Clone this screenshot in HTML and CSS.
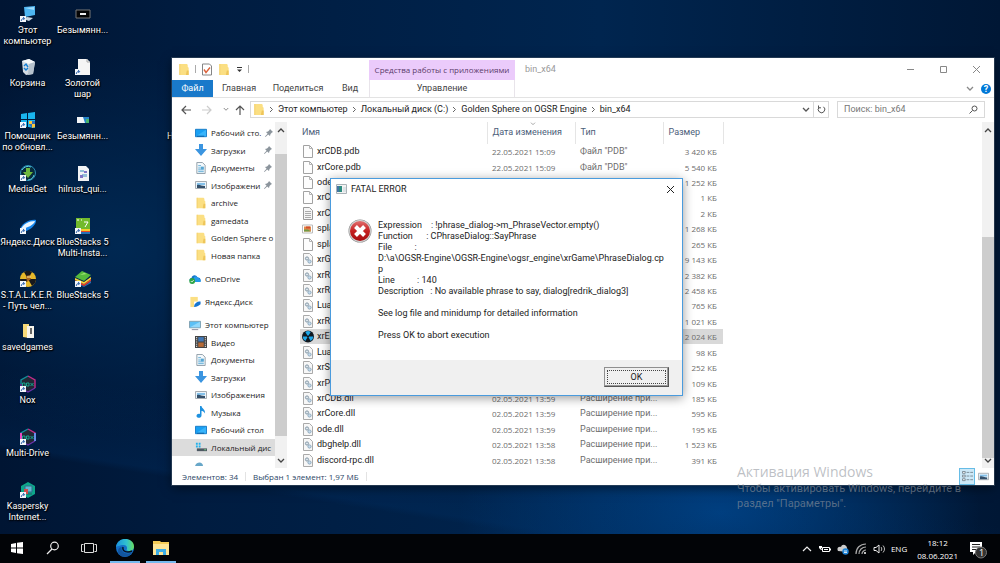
FILE: index.html
```html
<!DOCTYPE html>
<html lang="ru">
<head>
<meta charset="utf-8">
<title>Рабочий стол</title>
<link rel="stylesheet" href="styles.css">
</head>
<body>
<svg class="defs" aria-hidden="true">
  <defs>
    <symbol id="folder" viewBox="0 0 12 14"><path d="M1 1h8l1 1v2l1 1v8H1z" fill="#fbdf83"/><path d="M9 8h2v5H8z" fill="#eec55a"/><path d="M1 1h1v12H1z" fill="#f3cf6d"/></symbol>
    <symbol id="page" viewBox="0 0 10 13"><path d="M.5.5h6l3 3v9h-9z" fill="#fdfdfd" stroke="#a2a2a2"/><path d="M6.500.5v3h3" fill="none" stroke="#b5b5b5"/></symbol>
    <symbol id="dll" viewBox="0 0 10 13"><path d="M.5.5h6l3 3v9h-9z" fill="#f7f7f7" stroke="#aaa"/><circle cx="4" cy="5.500" r="1.600" fill="#dce5ec" stroke="#8599a8"/><circle cx="6.500" cy="8.500" r="1.600" fill="#c5dcee" stroke="#8fa9bc"/></symbol>
    <symbol id="textfile" viewBox="0 0 10 13"><path d="M.5.5h6l3 3v9h-9z" fill="#f4f4f4" stroke="#999"/><path d="M2 4.500h6M2 6.500h6M2 8.500h6M2 10.500h6" stroke="#aaa"/></symbol>
    <symbol id="picfile" viewBox="0 0 12 12"><path d="M.5 2.500h10v8H.5z" fill="#fff" stroke="#bbb"/><path d="M2 4h7v5H2z" fill="#e2874b"/><path d="M2 7h4l3 2H2z" fill="#709b45"/><path d="M4 4h4v2H4z" fill="#d14e2c"/></symbol>
    <symbol id="nuke" viewBox="0 0 12 12"><circle cx="6" cy="6" r="6" fill="#101820"/><path d="M6 6 3.300 1.400a5.300 5.300 0 0 1 5.400 0zM6 6h5.300a5.300 5.300 0 0 1-2.600 4.600zM6 6 3.300 10.600A5.300 5.300 0 0 1 .7 6z" fill="#20a7e8"/><circle cx="6" cy="6" r="1.100" fill="#101820"/></symbol>
    <symbol id="desk" viewBox="0 0 13 11"><path d="M.5 1.500h12v8H.5z" fill="#19a0f3" stroke="#1277c4"/><path d="M1 9 12 2v7z" fill="#38b4fb"/><path d="M2 9h8" stroke="#0b5b9c"/></symbol>
    <symbol id="down" viewBox="0 0 12 12"><path d="M4 0h4v5h4L6 12 0 5h4z" fill="#3b95e0"/></symbol>
    <symbol id="doc" viewBox="0 0 12 13"><path d="M1.500.5h6l3 3v9h-9z" fill="#f4f9fc" stroke="#8c9aa5"/><path d="M3 4h3M3 6.500h6M3 8.500h6M3 10.500h6" stroke="#55a5d2"/><path d="M6 5h3v3H6z" fill="#55a5d2"/></symbol>
    <symbol id="pics" viewBox="0 0 12 10"><path d="M.5 1.500h11v7H.5z" fill="#eaf4fb" stroke="#a7adb2"/><path d="M2 3h8v2H2z" fill="#83c0e9"/><path d="M2 5c3-1 4 1 8 1v2H2z" fill="#34506b"/></symbol>
    <symbol id="pin" viewBox="0 0 8 8"><path d="m5 0 3 3-1 .5L5.500 5 5 7 3.200 5.400.5 8 0 7.500l2.600-2.700L1 3l2-.5L4.500 1z" fill="#8b949c"/></symbol>
    <symbol id="cloud" viewBox="0 0 12 10"><path d="M3 8C-.5 8 0 4 2.500 4 3 1 7 0 8.500 3.500 12 3 13 8 9.500 8z" fill="#1173c9"/><path d="M5 3c2-2 5 1 7 4 0 1-1 1-2 1H4z" fill="#2499e9"/><circle cx="3.200" cy="7" r="2.900" fill="#2da445"/><path d="m1.800 7 1 1.100 1.900-2" fill="none" stroke="#fff" stroke-width=".8"/></symbol>
    <symbol id="ydisk" viewBox="0 0 12 13"><path d="M1 1h8v11H1z" fill="#fbdf83"/><path d="M5 6h7v7H5z" fill="#fff"/><path d="M5 12c0-4 3-6 7-6v3c-1 1-4 3-7 3z" fill="#1675d1"/></symbol>
    <symbol id="pc" viewBox="0 0 13 11"><path d="M.5 1.500h12v7H.5z" fill="#5cc0f5" stroke="#7f9dad"/><path d="m1 8 11-6v6z" fill="#91d8fb"/><path d="M3 10.500h7" stroke="#889"/></symbol>
    <symbol id="video" viewBox="0 0 11 11"><path d="M0 0h11v11H0z" fill="#454545"/><path d="M3 1h5v4H3z" fill="#4278b7"/><path d="M3 6h5v4H3z" fill="#b66a36"/><path d="M1.500 1v9M9.500 1v9" stroke="#ddd" stroke-dasharray="1 1"/></symbol>
    <symbol id="music" viewBox="0 0 10 12"><path d="M4 0h1.500C6 3 9.500 3 9 7.500 8 5.500 6.500 5 5.500 5v4.500c0 3-5 3-5 .5 0-2 2-2.500 3.500-2z" fill="#1e91df"/></symbol>
    <symbol id="disk" viewBox="0 0 13 11"><path d="M1 1h2v2H1zM4 1h2v2H4zM1 4h2v2H1zM4 4h2v2H4z" fill="#20b1ec"/><path d="M2 7h11v3H2z" fill="#4d5963"/><path d="M10 8h2v1h-2z" fill="#72e084"/></symbol>
    <symbol id="net" viewBox="0 0 12 4"><path d="M0 4c2-5 8-4 8 0z" fill="#68a7c8"/></symbol>
    <symbol id="cu" viewBox="0 0 8 6"><path d="M1 5 4 2l3 3" fill="none" stroke="currentColor" stroke-width="1.300"/></symbol>
    <symbol id="cd" viewBox="0 0 8 6"><path d="m1 1 3 3 3-3" fill="none" stroke="currentColor" stroke-width="1.300"/></symbol>
    <symbol id="cr" viewBox="0 0 5 7"><path d="m1 1 2.500 2.500L1 6" fill="none" stroke="currentColor"/></symbol>
    <symbol id="cut" viewBox="0 0 6 6"><path d="M0 0h6v6H0z" fill="#f3f6fa"/><path d="M1.300 5c0-2 1-2.500 3-2.500M3 1l1.700 1.500L3.300 4" fill="none" stroke="#235aa6" stroke-width=".9"/></symbol>
    <symbol id="nox" viewBox="0 0 18 18"><path d="m9 1 7 4v8l-7 4-7-4V5z" fill="#222735"/><path d="m9 1-7 4v4" fill="none" stroke="#12909a" stroke-width="1.400"/><path d="m9 1 7 4v8" fill="none" stroke="#c42c87" stroke-width="1.400"/><path d="M2 9v4l7 4 7-4" fill="none" stroke="#6b32a8" stroke-width="1.400"/><path d="M3.500 11V8H6v3M7.500 8H10v3H7.500zM11.500 8l3 3M14.500 8l-3 3" fill="none" stroke="#12b49a" stroke-width=".9"/></symbol>
  </defs>
</svg>

<main class="desktop">
  <section class="shortcuts" aria-label="Ярлыки">
    <div class="sc first"><svg viewBox="0 0 18 18"><path d="m5 2 11-1v9L6 12z" fill="#4db5f1"/><path d="m6 3 9-1v3z" fill="#9fdcfc"/><path d="m8 12 6 1-4 3-6-2z" fill="#c9d7e1"/><use href="#cut" x="1" y="11" width="6" height="6"/></svg><span>Этот компьютер</span></div>
    <div class="sc second"><svg viewBox="0 0 18 18"><path d="M2 5h14v8H2z" fill="#050505" stroke="#777"/><path d="M6 8h6v2H6z" fill="#eee"/></svg><span>Безымянн...</span></div>
    <div class="sc first"><svg viewBox="0 0 18 18"><path d="m3 3 7-2 6 3-2 12-7 1-3-3z" fill="#d4dce4"/><path d="m3 3 7-2 6 3-6 2z" fill="#f6f8fa"/><path d="m10 6 6-2-2 12-5 1z" fill="#b6c2cd"/><path d="m5 8 2-2 2 3M9 10l-2 2-2-2" fill="none" stroke="#147ed4" stroke-width="1.400"/></svg><span>Корзина</span></div>
    <div class="sc second"><svg viewBox="0 0 18 18"><path d="M4 1h9l3 3v13H4z" fill="#f5f5f5"/><path d="M13 1v3h3" fill="none" stroke="#aaa"/><use href="#cut" x="1" y="11" width="6" height="6"/></svg><span>Золотой<br>шар</span></div>
    <div class="sc first"><svg viewBox="0 0 18 18"><path d="m2 3 6-1v6H2zM9 2l7-1v7H9zM2 9h6v7l-6-1zM9 9h7v8l-7-1z" fill="#19b5ee"/><path d="M10 10h3v3h-3zM13 13h3v3l-3 1z" fill="#fbc638"/><path d="M13 10h3v3h-3zM10 13h3v4z" fill="#2c6fbc"/><use href="#cut" x="1" y="11" width="6" height="6"/></svg><span>Помощник по обновл...</span></div>
    <div class="sc second"><svg viewBox="0 0 18 18"><path d="M3 6h12v6H3z" fill="#2584c9"/><path d="M3 6h6l2 6H3z" fill="#f2f5f7"/><path d="M12 8h3v4h-3z" fill="#46b36b"/></svg><span>Безымянн...</span></div>
    <div class="sc fourth"><svg viewBox="0 0 18 18"></svg><span>Новая пап...</span></div>
    <div class="sc first"><svg viewBox="0 0 18 18"><circle cx="9" cy="9" r="7.500" fill="#082b3b" stroke="#298db3"/><path d="M3 6a7 7 0 0 1 9-3M15 11a7 7 0 0 1-6 5" stroke="#5acbe0" fill="none"/><path d="M7 4h4v4h3l-5 6-5-6h3z" fill="#6eb83e"/><use href="#cut" x="1" y="11" width="6" height="6"/></svg><span>MediaGet</span></div>
    <div class="sc second"><svg viewBox="0 0 18 18"><path d="M4 2h8l3 3v12H4z" fill="#f2f3f5"/><path d="M6 6h4v2H6zM8 10h5v3H8z" fill="#94bfd8"/><path d="M10 7h3v2h-3zM6 11h3v3H6z" fill="#8075c6"/></svg><span>hilrust_qui...</span></div>
    <div class="sc first"><svg viewBox="0 0 18 18"><path d="M1 13C2 7 10 2 17 3c1 5-8 12-14 12z" fill="#1687ed"/><path d="M2 12C4 7 10 4 16 4c-1 4-8 7-14 8z" fill="#eaf6ff"/><use href="#cut" x="1" y="11" width="6" height="6"/></svg><span>Яндекс.Диск</span></div>
    <div class="sc second"><svg viewBox="0 0 18 18"><path d="M2 1h14v11H2z" fill="#72ba2c"/><path d="M3 12h13v2H3z" fill="#f4ce2b"/><path d="M3 14h13v1H3z" fill="#e14828"/><path d="M4 15h12v2H4z" fill="#2471b8"/><path d="M10 5h4l-3 5M3 3h2M7 3h1" stroke="#fff" fill="none"/><use href="#cut" x="1" y="11" width="6" height="6"/></svg><span>BlueStacks 5 Multi-Insta...</span></div>
    <div class="sc first"><svg viewBox="0 0 18 18"><circle cx="9" cy="9" r="8" fill="#e7b929"/><path d="M9 9 5 2a8 8 0 0 1 8 0zM9 9h8a8 8 0 0 1-4 7zM9 9l-4 7a8 8 0 0 1-4-7z" fill="#17191d"/><path d="m7 6 4-1 1 4-4 3z" fill="#a8641f"/><path d="M8 7h4" stroke="#fff0a0"/><use href="#cut" x="1" y="11" width="6" height="6"/></svg><span>S.T.A.L.K.E.R. - Путь чел...</span></div>
    <div class="sc second"><svg viewBox="0 0 18 18"><path d="m1 12 9 4 7-5v2l-7 4-9-4z" fill="#286bb3"/><path d="m1 10 9 4 7-5v2l-7 5-9-4z" fill="#e13f2a"/><path d="m1 8 9 4 7-5v2l-7 5-9-4z" fill="#f6d439"/><path d="m1 7 7-6 9 4-7 6z" fill="#55b93d"/><path d="m6 5 4-2 3 1z" fill="#a6e678"/><use href="#cut" x="1" y="11" width="6" height="6"/></svg><span>BlueStacks 5</span></div>
    <div class="sc first"><svg viewBox="0 0 18 18"><path d="M4 2h6v14l-6-1z" fill="#f6d978"/><path d="M8 4h7v12H8z" fill="#f7f5ed"/><path d="M11 6h2v6h-2z" fill="#666"/></svg><span>savedgames</span></div>
    <div class="sc first"><svg viewBox="0 0 18 18"><use href="#nox"/><use href="#cut" x="1" y="11" width="6" height="6"/></svg><span>Nox</span></div>
    <div class="sc first"><svg viewBox="0 0 18 18"><use href="#nox"/><path d="M2 5v8" stroke="#e64bc3" stroke-width="2"/><path d="M16 5v8" stroke="#668de9" stroke-width="2"/><use href="#cut" x="1" y="11" width="6" height="6"/></svg><span>Multi-Drive</span></div>
    <div class="sc first"><svg viewBox="0 0 18 18"><path d="m9 1 7 4v8l-7 4-7-4V5z" fill="#0ca78a"/><path d="M6 5h7v6H6z" fill="#65b6d1" stroke="#2c6e89"/><path d="M8 13h5" stroke="#295b68"/><path d="M5 8h4v5H5z" fill="#ce4c4b"/><use href="#cut" x="1" y="11" width="6" height="6"/></svg><span>Kaspersky Internet...</span></div>
  </section>

  <section class="explorer" aria-label="bin_x64">
    <header class="titlebar">
      <div class="quick">
        <svg class="i12"><use href="#folder"/></svg><i class="bar"></i>
        <svg class="i12" viewBox="0 0 12 12"><path d="M1.500.5h7l2 2v9h-9z" fill="#fff" stroke="#858585"/><path d="m3 6 2 3 4-5" fill="none" stroke="#dc623a" stroke-width="1.400"/></svg>
        <svg class="i12"><use href="#folder"/></svg>
        <svg class="small" viewBox="0 0 8 8"><path d="M2 2.500h5" stroke="#333"/><path d="M2 4.500h5L4.500 7z" fill="#333"/></svg><i class="bar"></i>
      </div>
      <div class="context">Средства работы с приложениями</div>
      <div class="wtitle">bin_x64</div>
      <div class="controls">
        <button aria-label="Свернуть"><svg viewBox="0 0 9 9"><path d="M1 4.500h7"/></svg></button>
        <button aria-label="Развернуть"><svg viewBox="0 0 9 9"><path d="M1.500 1.500h6v6h-6z"/></svg></button>
        <button aria-label="Закрыть"><svg viewBox="0 0 9 9"><path d="m1 1 7 7M8 1 1 8"/></svg></button>
      </div>
    </header>
    <nav class="tabs">
      <button class="file">Файл</button><button class="t1">Главная</button><button class="t2">Поделиться</button><button class="t3">Вид</button><button class="manage">Управление</button>
      <span class="tabend"><svg class="chev"><use href="#cd"/></svg><button class="help" aria-label="Справка">?</button></span>
    </nav>
    <div class="address">
      <div class="arrows">
        <svg viewBox="0 0 10 10"><path d="M10 5H1M5 1 1 5l4 4"/></svg>
        <svg class="off" viewBox="0 0 10 10"><path d="M0 5h9M5 1l4 4-4 4"/></svg>
        <svg class="tiny"><use href="#cd"/></svg>
        <svg viewBox="0 0 10 10"><path d="M5 10V1M1 5l4-4 4 4"/></svg>
      </div>
      <div class="path">
        <svg class="i12"><use href="#folder"/></svg>
        <svg class="cr"><use href="#cr"/></svg><a href="#">Этот компьютер</a>
        <svg class="cr"><use href="#cr"/></svg><a href="#">Локальный диск (C:)</a>
        <svg class="cr"><use href="#cr"/></svg><a href="#">Golden Sphere on OGSR Engine</a>
        <svg class="cr"><use href="#cr"/></svg><a href="#">bin_x64</a>
        <svg class="chev end"><use href="#cd"/></svg>
        <button class="refresh" aria-label="Обновить"><svg viewBox="0 0 9 9"><path d="M6.500 1.800A3.300 3.300 0 1 1 2 2.300M1.500.5v2.300h2.500" fill="none" stroke="#555"/></svg></button>
      </div>
      <label class="search"><input type="text" aria-label="Поиск" placeholder="Поиск: bin_x64"><svg viewBox="0 0 9 9"><circle cx="5.500" cy="3.500" r="2.500"/><path d="M3.500 5.500.5 8.500"/></svg></label>
    </div>
    <div class="panes">
      <aside class="side">
        <div class="tree">
          <ul class="group">
            <li><svg><use href="#desk"/></svg><span>Рабочий сто.</span><svg class="pin"><use href="#pin"/></svg></li>
            <li><svg><use href="#down"/></svg><span>Загрузки</span><svg class="pin"><use href="#pin"/></svg></li>
            <li><svg><use href="#doc"/></svg><span>Документы</span><svg class="pin"><use href="#pin"/></svg></li>
            <li><svg><use href="#pics"/></svg><span>Изображени</span><svg class="pin"><use href="#pin"/></svg></li>
            <li><svg><use href="#folder"/></svg><span>archive</span></li>
            <li><svg><use href="#folder"/></svg><span>gamedata</span></li>
            <li><svg><use href="#folder"/></svg><span>Golden Sphere o</span></li>
            <li><svg><use href="#folder"/></svg><span>Новая папка</span></li>
          </ul>
          <ul class="solo"><li class="root"><svg><use href="#cloud"/></svg><span>OneDrive</span></li></ul>
          <ul class="solo"><li class="root"><svg><use href="#ydisk"/></svg><span>Яндекс.Диск</span></li></ul>
          <ul class="group">
            <li class="root"><svg><use href="#pc"/></svg><span>Этот компьютер</span></li>
            <li><svg><use href="#video"/></svg><span>Видео</span></li>
            <li><svg><use href="#doc"/></svg><span>Документы</span></li>
            <li><svg><use href="#down"/></svg><span>Загрузки</span></li>
            <li><svg><use href="#pics"/></svg><span>Изображения</span></li>
            <li><svg><use href="#music"/></svg><span>Музыка</span></li>
            <li><svg><use href="#desk"/></svg><span>Рабочий стол</span></li>
            <li class="sel"><svg><use href="#disk"/></svg><span>Локальный дис</span></li>
          </ul>
          <svg class="more"><use href="#net"/></svg>
        </div>
        <div class="scroll"><svg><use href="#cu"/></svg><i class="thumb s1"></i><svg><use href="#cd"/></svg></div>
      </aside>
      <div class="files">
        <table>
          <colgroup><col class="c1"><col class="c2"><col class="c3"><col class="c4"></colgroup>
          <thead><tr><th>Имя</th><th>Дата изменения<svg class="sort"><use href="#cd"/></svg></th><th>Тип</th><th>Размер</th></tr></thead>
          <tbody>
            <tr><td><svg><use href="#page"/></svg>xrCDB.pdb</td><td>22.05.2021 15:09</td><td>Файл "PDB"</td><td>3 420 КБ</td></tr>
            <tr><td><svg><use href="#page"/></svg>xrCore.pdb</td><td>22.05.2021 15:09</td><td>Файл "PDB"</td><td>5 540 КБ</td></tr>
            <tr><td><svg><use href="#page"/></svg>ode.pdb</td><td></td><td></td><td>1 252 КБ</td></tr>
            <tr><td><svg><use href="#page"/></svg>xrC</td><td></td><td></td><td>1 КБ</td></tr>
            <tr><td><svg><use href="#textfile"/></svg>xrC</td><td></td><td></td><td>2 КБ</td></tr>
            <tr><td><svg><use href="#picfile"/></svg>spla</td><td></td><td></td><td>1 268 КБ</td></tr>
            <tr><td><svg><use href="#page"/></svg>spla</td><td></td><td></td><td>265 КБ</td></tr>
            <tr><td><svg><use href="#dll"/></svg>xrG</td><td></td><td></td><td>9 143 КБ</td></tr>
            <tr><td><svg><use href="#dll"/></svg>xrR</td><td></td><td></td><td>2 382 КБ</td></tr>
            <tr><td><svg><use href="#dll"/></svg>xrR</td><td></td><td></td><td>2 458 КБ</td></tr>
            <tr><td><svg><use href="#dll"/></svg>Lua</td><td></td><td></td><td>765 КБ</td></tr>
            <tr><td><svg><use href="#dll"/></svg>xrR</td><td></td><td></td><td>1 021 КБ</td></tr>
            <tr class="sel"><td><svg><use href="#nuke"/></svg>xrEn</td><td></td><td></td><td>2 024 КБ</td></tr>
            <tr><td><svg><use href="#dll"/></svg>Lua</td><td></td><td></td><td>98 КБ</td></tr>
            <tr><td><svg><use href="#dll"/></svg>xrSo</td><td></td><td></td><td>252 КБ</td></tr>
            <tr><td><svg><use href="#dll"/></svg>xrP</td><td></td><td></td><td>109 КБ</td></tr>
            <tr><td><svg><use href="#dll"/></svg>xrCDB.dll</td><td>02.05.2021 13:59</td><td>Расширение при...</td><td>185 КБ</td></tr>
            <tr><td><svg><use href="#dll"/></svg>xrCore.dll</td><td>02.05.2021 13:59</td><td>Расширение при...</td><td>595 КБ</td></tr>
            <tr><td><svg><use href="#dll"/></svg>ode.dll</td><td>02.05.2021 13:59</td><td>Расширение при...</td><td>195 КБ</td></tr>
            <tr><td><svg><use href="#dll"/></svg>dbghelp.dll</td><td>02.05.2021 13:58</td><td>Расширение при...</td><td>1 523 КБ</td></tr>
            <tr><td><svg><use href="#dll"/></svg>discord-rpc.dll</td><td>02.05.2021 13:58</td><td>Расширение при...</td><td>391 КБ</td></tr>
          </tbody>
        </table>
      </div>
      <div class="scroll"><svg><use href="#cu"/></svg><i class="thumb s2"></i><svg><use href="#cd"/></svg></div>
    </div>
    <footer class="status">
      <span>Элементов: 34</span><i></i><span>Выбран 1 элемент: 1,97 МБ</span><i></i>
      <div class="views">
        <button class="on" aria-label="Таблица"><svg viewBox="0 0 12 12"><path d="M.5.5h3v2h-3zM.5 4.500h3v2h-3zM.5 8.500h3v2h-3z" fill="#fff" stroke="#76858f"/><path d="M5 1.500h3M9 1.500h3M5 5.500h3M9 5.500h3M5 9.500h3M9 9.500h3" stroke="#76858f"/></svg></button>
        <button aria-label="Крупные значки"><svg viewBox="0 0 12 10"><use href="#pics"/></svg></button>
      </div>
    </footer>
  </section>

  <section class="dialog" role="dialog" aria-label="FATAL ERROR">
    <header><svg viewBox="0 0 11 10"><path d="M.5.5h10v9H.5z" fill="#f3f3f3" stroke="#aab3b8"/><path d="M1 2h5v6H1z" fill="#2d8c80"/><path d="M1 2h2v6H1z" fill="#4374a5"/><path d="M7 3h3v5H7z" fill="#dce3e6"/></svg><span>FATAL ERROR</span>
      <button aria-label="Закрыть"><svg viewBox="0 0 9 9"><path d="m1 1 7 7M8 1 1 8" stroke="#222"/></svg></button></header>
    <div class="message">
      <svg viewBox="0 0 24 24"><defs><linearGradient id="red" x2="0" y2="1"><stop stop-color="#e27070"/><stop offset=".5" stop-color="#c51f1f"/><stop offset="1" stop-color="#a60d10"/></linearGradient></defs><circle cx="12" cy="12" r="11.500" fill="#8c8c8c"/><circle cx="12" cy="12" r="10.900" fill="#d5d5d5"/><circle cx="12" cy="12" r="10" fill="url(#red)"/><path d="m7.500 7.500 9 9M16.500 7.500l-9 9" stroke="#fff" stroke-width="4"/></svg>
      <p>Expression    : !phrase_dialog-&gt;m_PhraseVector.empty()
Function      : CPhraseDialog::SayPhrase
File          :
D:\a\OGSR-Engine\OGSR-Engine\ogsr_engine\xrGame\PhraseDialog.cp
p
Line          : 140
Description   : No available phrase to say, dialog[redrik_dialog3]

See log file and minidump for detailed information

Press OK to abort execution</p>
    </div>
    <footer><button class="ok"><span>OK</span></button></footer>
  </section>

  <div class="watermark"><strong>Активация Windows</strong><span>Чтобы активировать Windows, перейдите в<br>раздел "Параметры".</span></div>
</main>

<footer class="taskbar">
  <div class="apps">
    <button aria-label="Пуск"><svg viewBox="0 0 16 16"><path d="m2 4 5-1v4.500H2zM8 2.800 14 2v5.500H8zM2 8.500h5V13l-5-1zM8 8.500h6V14l-6-.8z" fill="#fff"/></svg></button>
    <button aria-label="Поиск"><svg viewBox="0 0 16 16"><circle cx="9.500" cy="6" r="3.800" fill="none" stroke="#eee" stroke-width="1.200"/><path d="m7 9-5 5" stroke="#eee" stroke-width="1.200"/></svg></button>
    <button aria-label="Представление задач"><svg viewBox="0 0 16 16"><path d="M3.500 3.500h9v9h-9zM2.500 4.500H.5v7h2M13.500 4.500h2v7h-2" fill="none" stroke="#ddd"/></svg></button>
    <button class="open" aria-label="Edge"><svg class="big" viewBox="0 0 20 20"><defs><linearGradient id="edge"><stop stop-color="#1a91dd"/><stop offset=".6" stop-color="#31c2cf"/><stop offset="1" stop-color="#69dd5c"/></linearGradient></defs><circle cx="10" cy="10" r="9" fill="#1470c8"/><path d="M1 9C2-2 19-1 19 8.500c0 5-6 5.500-7.500 3.500 1-1 1-5-3-5C5 7 1 9 1 9z" fill="url(#edge)"/><path d="M7 9c-2 4 3 9 11 5-4 7-15 6-15-1 0-3 2-4 4-4z" fill="#12559e"/><path d="M8 9c-1 5 5 6 9 4" fill="none" stroke="#071220" stroke-width="1.500"/></svg></button>
    <button class="open" aria-label="Проводник"><svg class="big" viewBox="0 0 20 20"><path d="M2 3h7l1 1h8v13H2z" fill="#f3cb57"/><path d="M2 6h16v11H2z" fill="#fde596"/><path d="M5 11h10v6h-3v-3H8v3H5z" fill="#3daee6"/></svg></button>
  </div>
  <div class="tray">
    <svg viewBox="0 0 12 12"><path d="m2 8 4-4 4 4" fill="none" stroke="#eee" stroke-width="1.200"/></svg>
    <svg viewBox="0 0 12 12"><path d="M3.500 4.500h7v4h-7z" fill="none" stroke="#fff"/><path d="M5 6h4v1H5zM11 5.500h1v2h-1zM0 3h3v2H2l1 2H2L0 5z" fill="#fff"/></svg>
    <svg viewBox="0 0 12 12"><path d="M1 8c-2-4 2-5 3-4 1-4 6-2 6 1l1 4z" fill="#ccc"/><circle cx="8.500" cy="8.500" r="3.200" fill="#2085d8"/><path d="M7 8h3M7 9.500h3" stroke="#fff" stroke-width=".8"/></svg>
    <svg viewBox="0 0 12 12"><path d="M1 11C1 5 5 1 11 1M4 11c0-4 3-7 7-7M7 11c0-2 2-4 4-4" fill="none" stroke="#aaa" stroke-width="1.200"/><circle cx="10" cy="10" r="1" fill="#fff"/></svg>
    <svg viewBox="0 0 12 12"><path d="M1 4.500h2L6 2v8L3 7.500H1z" fill="none" stroke="#eee"/><path d="M8 4c1 1 1 3 0 4M10 2.500c2 2 2 5 0 7" fill="none" stroke="#bbb"/></svg>
    <span>ENG</span>
    <time>18:12<br>08.06.2021</time>
    <svg class="note" viewBox="0 0 20 20"><path d="M2 3h12v10H8l-3 3v-3H2z" fill="#fff"/><path d="M4 5.500h8M4 8h8M4 10.500h5" stroke="#222"/><circle cx="13" cy="13.500" r="5.500" fill="#333" stroke="#777"/><text x="11" y="17">1</text></svg>
  </div>
</footer>
</body>
</html>
```
FILE: styles.css
```css
* { box-sizing: border-box; }
body {
  margin: 0;
  height: 100vh;
  display: flex;
  flex-direction: column;
  overflow: hidden;
  font: 9px/11px Roboto, "Open Sans", sans-serif;
  color: #222;
}
button { font: inherit; color: inherit; border: 0; padding: 0; background: none; }
ul { list-style: none; margin: 0; padding: 0; }
a { color: inherit; text-decoration: none; }
svg { flex: none; display: block; }
.defs { position: absolute; width: 0; height: 0; }

/* Desktop */
.desktop {
  flex: 1;
  min-height: 0;
  position: relative;
  background:
    linear-gradient(9deg, transparent 12%, rgba(0, 50, 105, .25) 13%, transparent 24%),
    radial-gradient(ellipse 260px 130px at 72% 96%, #004082, transparent),
    radial-gradient(ellipse 260px 190px at 12% 46%, #002852, transparent),
    linear-gradient(90deg, #001533, #001c40 20%, #00254f 60%, #001735);
}
.shortcuts {
  display: grid;
  grid-template-columns: repeat(4, 55px);
  grid-template-rows: repeat(10, 1fr);
  height: 100%;
  padding-top: 5px;
  color: #fff;
  text-align: center;
  text-shadow: 0 1px 2px #000, 1px 1px 1px #000;
}
.sc { display: flex; flex-direction: column; align-items: center; min-width: 0; }
.sc svg { width: 18px; height: 18px; margin-bottom: 2px; }
.first { grid-column: 1; }
.second { grid-column: 2; }
.fourth { grid-column: 4; white-space: nowrap; }

/* Explorer window */
.explorer {
  position: absolute;
  left: 172px; right: 6px; top: 58px; bottom: 49px;
  display: flex;
  flex-direction: column;
  background: #fff;
  box-shadow: 0 0 0 1px rgba(70, 90, 110, .5), 0 3px 10px rgba(0, 0, 0, .5);
}
.titlebar { display: flex; height: 22px; align-items: center; }
.quick { width: 197px; padding-left: 6px; display: flex; align-items: center; gap: 5px; }
.i12 { width: 12px; height: 13px; }
.small { width: 8px; height: 8px; }
.chev { width: 8px; height: 6px; color: #888; }
.bar { width: 1px; height: 8px; background: #aaa; }
.context { width: 146px; height: 20px; align-self: flex-end; background: #ebcbfb; color: #5b3c6a; text-align: center; font: 8px/20px "Open Sans", sans-serif; white-space: nowrap; }
.wtitle { padding-left: 10px; color: #999; flex: 1; }
.controls { display: flex; gap: 24px; padding-right: 13px; }
.controls svg, .dialog header button svg { width: 9px; height: 9px; fill: none; stroke: #888; }
.tabs { display: flex; height: 17px; color: #444; }
.file { width: 41px; background: #1979ca; color: #fff; }
.t1 { width: 52px; }
.t2 { width: 66px; }
.t3 { width: 38px; }
.manage { width: 146px; border: solid #e8e4ea; border-width: 0 1px; }
.tabend { margin-left: auto; display: flex; align-items: center; gap: 7px; padding-right: 3px; }
.help { width: 10px; height: 10px; border-radius: 50%; background: #0078d7; color: #fff; font-weight: bold; line-height: 10px; }
.address { display: flex; height: 25px; align-items: center; border-top: 1px solid #e3e3e3; padding-right: 9px; padding-bottom: 1px; }
.arrows { width: 78px; display: flex; align-items: center; padding-left: 9px; gap: 11px; }
.arrows svg { width: 10px; height: 10px; fill: none; stroke: #555; stroke-width: 1.2; }
.arrows .off { stroke: #ccc; }
.arrows .tiny { width: 6px; height: 5px; color: #888; margin-right: -5px; stroke: none; }
.path { flex: 1; height: 17px; display: flex; align-items: center; border: 1px solid #d9d9d9; white-space: nowrap; padding-left: 2px; }
.cr { width: 5px; height: 7px; margin: 0 4px; color: #666; }
.path .end { margin-left: auto; margin-right: 3px; color: #555; }
.refresh { width: 15px; align-self: stretch; border-left: 1px solid #d9d9d9; display: grid; place-items: center; }
.refresh svg { width: 9px; height: 9px; }
.search { width: 148px; height: 17px; margin-left: 8px; border: 1px solid #d9d9d9; display: flex; align-items: center; padding: 0 6px; }
.search input { flex: 1; min-width: 0; border: 0; padding: 0; font: inherit; outline: 0; }
.search input::placeholder { color: #777; opacity: 1; }
.search svg { width: 9px; height: 9px; fill: none; stroke: #555; }

.panes { flex: 1; min-height: 0; display: flex; }
.side { width: 115px; display: flex; overflow: hidden; font: 8px/11px "Open Sans", sans-serif; }
.tree { flex: 1; min-width: 0; overflow: hidden; display: flex; flex-direction: column; gap: 6px; padding-top: 2px; }
.group { flex: none; height: 140px; display: grid; grid-auto-rows: 1fr; }
.solo { flex: none; height: 17px; display: grid; }
.tree li { display: flex; align-items: center; gap: 4px; padding-left: 23px; white-space: nowrap; min-width: 0; }
.tree li svg { width: 12px; height: 12px; }
.tree li.root { padding-left: 17px; }
.tree li .pin { width: 8px; height: 8px; margin-left: auto; margin-right: 3px; }
.tree .sel { background: #dcdcdc; }
.more { width: 12px; height: 4px; margin-left: 23px; }
.scroll { width: 12px; flex: none; background: #f1f1f1; display: flex; flex-direction: column; align-items: center; padding: 5px 0 4px; color: #444; }
.scroll svg { width: 8px; height: 6px; }
.thumb { width: 100%; background: #cdcdcd; }
.s1 { flex: 1; margin: 21px 0 22px; }
.s2 { flex: 1; margin: 104px 0 0; }

.files { flex: 1; min-width: 0; padding-left: 13px; overflow: hidden; }
table { table-layout: fixed; border-collapse: collapse; width: 423px; height: 100%; white-space: nowrap; }
.c1 { width: 187px; }
.c2 { width: 88px; }
.c3 { width: 88px; }
.c4 { width: 60px; }
th { height: 22px; padding: 0 0 1px 5px; text-align: left; font-weight: normal; color: #4c607a; border-right: 1px solid #e5e5e5; position: relative; }
th:first-child { padding-left: 2px; }
.sort { position: absolute; top: 0; left: 42px; width: 6px; height: 4px; color: #999; }
td { padding: 0 0 0 5px; color: #6d6d6d; }
td:first-child { padding-left: 2px; color: #222; }
td:nth-child(2), td:last-child { font-family: "Open Sans", sans-serif; font-size: 8px; }
td:last-child { text-align: right; padding: 0 6px 0 0; }
td svg { display: inline-block; vertical-align: middle; width: 12px; height: 13px; margin-right: 3px; }
tr.sel { background: #d9d9d9; }

.status { height: 17px; display: flex; align-items: center; padding-left: 10px; color: #2b4566; font: 8px/11px "Open Sans", sans-serif; }
.status i { width: 1px; height: 9px; margin: 0 7px; background: #e3e3e3; }
.views { margin-left: auto; align-self: stretch; display: flex; padding-right: 3px; gap: 0; }
.views button { width: 16px; display: grid; place-items: center; }
.views .on { background: #cce8f7; border: 1px solid #66bce6; }
.views svg { width: 11px; height: 11px; }

/* Error dialog */
.dialog {
  position: absolute;
  left: 330px; top: 178px;
  width: 353px;
  border: 1px solid #4a9bdd;
  background: #fff;
  box-shadow: 0 2px 10px rgba(0, 0, 0, .4);
}
.dialog header { display: flex; align-items: center; height: 20px; padding: 0 7px 0 5px; gap: 4px; }
.dialog header > svg { width: 11px; height: 10px; }
.dialog header button { margin-left: auto; }
.message { display: flex; padding: 20px 10px 19px; gap: 6px; min-height: 161px; }
.message svg { width: 24px; height: 24px; margin-left: 7px; }
.message p { margin: 1px 0 0; white-space: pre; line-height: 11px; }
.dialog footer { height: 35px; background: #f0f0f0; padding: 7px 13px; display: flex; justify-content: flex-end; }
.ok { width: 65px; height: 20px; border: 1px solid; border-color: #8f8f8f #555 #555 #8f8f8f; box-shadow: inset -1px -1px #999; padding: 2px; }
.ok span { display: block; height: 14px; line-height: 12px; border: 1px dotted #444; }

.watermark { position: absolute; left: 737px; top: 463px; color: rgba(145, 150, 158, .6); font-size: 11px; line-height: 15px; white-space: nowrap; }
.watermark strong { display: block; font-family: "Open Sans", sans-serif; font-weight: normal; font-size: 14px; line-height: 18px; }

/* Taskbar */
.taskbar { height: 29px; display: flex; justify-content: space-between; background: #020407; color: #fff; }
.apps { display: flex; gap: 6px; padding-left: 2px; }
.apps button { width: 30px; display: grid; place-items: center; border-bottom: 2px solid transparent; }
.apps svg { width: 16px; height: 16px; }
.apps .big { width: 20px; height: 20px; }
.apps .open { border-color: #76b9ed; }
.tray { display: flex; align-items: center; gap: 6px; padding-right: 12px; font: 8px/13px "Open Sans", sans-serif; }
.tray > svg { width: 12px; height: 12px; }
.tray time { text-align: center; margin: 0 4px; }
.tray .note { width: 20px; height: 20px; }
.note text { font-size: 9px; fill: #fff; }
```
